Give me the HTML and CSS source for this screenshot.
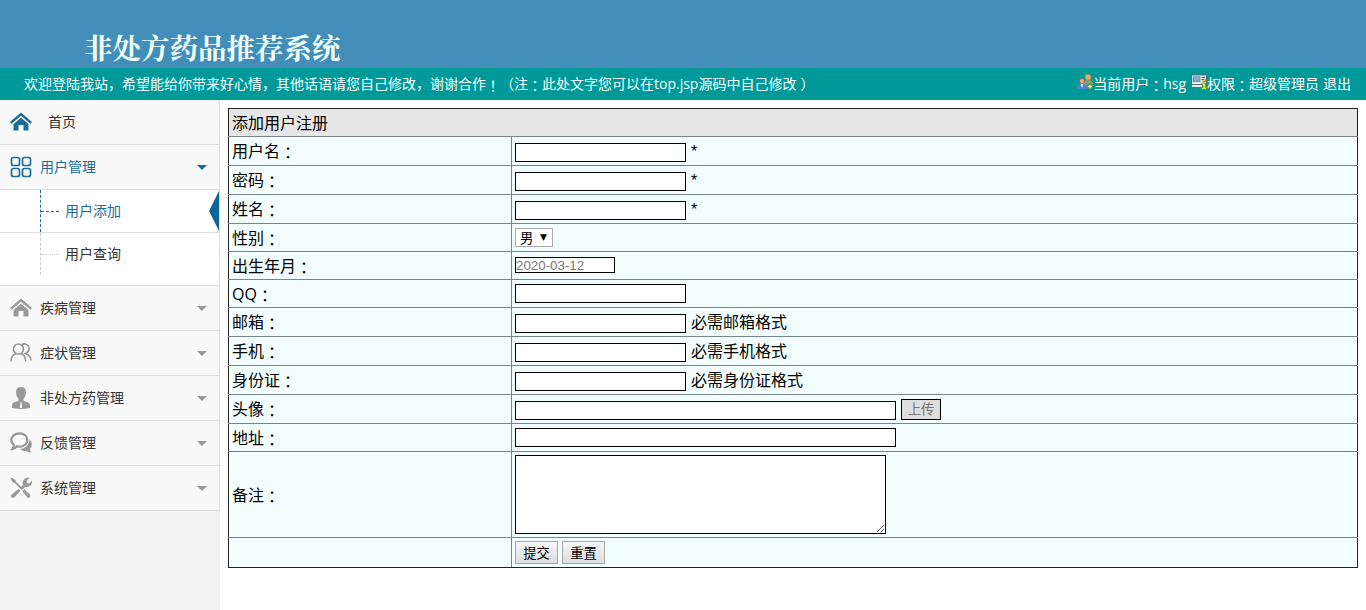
FILE: index.html
```html
<!DOCTYPE html>
<html>
<head>
  <meta charset="UTF-8">
  <title>非处方药品推荐系统</title>
  <link rel="stylesheet" href="styles.css">
</head>
<body>

  <div class="header">
    <h1>非处方药品推荐系统</h1>
  </div>

  <div class="topbar">
    <div class="welcome">欢迎登陆我站，希望能给你带来好心情，其他话语请您自己修改，谢谢合作<span class="colon">！</span>（注<span class="colon">：</span>此处文字您可以在top.jsp源码中自己修改<span class="paren">）</span></div>
    <div class="user-info">
      <svg class="ico" width="16" height="16" viewBox="0 0 16 16">
        <path d="M6 12V9.500q0-3.500 5-3.500t5 3.500V14H6z" fill="#7ea06a"/>
        <circle cx="11" cy="3.200" r="3" fill="#dcae68" stroke="#b0843c" stroke-width=".6"/>
        <path d="M0 15q0-5.500 5-5.500t5 5.500z" fill="#4b83d0"/>
        <path d="M3.500 9.500h3L5 14z" fill="#fff"/>
        <circle cx="5" cy="7" r="2.500" fill="#eeb08c" stroke="#b2543a" stroke-width=".8"/>
        <circle cx="13" cy="12.500" r="2.900" fill="#459c38"/>
        <path d="M13 10.800v3.400M11.300 12.500h3.400" stroke="#fff" stroke-width="1.200"/>
      </svg>
      <span>当前用户<span class="colon">：</span>hsg</span>
      <svg class="ico ico-role" width="16" height="16" viewBox="0 0 16 16">
        <rect x=".5" y="1" width="15" height="9.500" fill="#f1f3f5" stroke="#5d6a78"/>
        <rect x="2" y="2.800" width="7" height="5" fill="#84a9cf" stroke="#56708c" stroke-width=".6"/>
        <path d="M10.500 3.500h3.500M10.500 5.500h2" stroke="#456"/>
        <path d="M1 12h10" stroke="#e9eef0" stroke-width="2"/>
        <path d="M12 5.500h2.500v2.300H12zM10.800 9h3.700v4.500h1v2h-5v-2H12V11h-1.200z" fill="#d8ec28" stroke="#6d8d14" stroke-width=".7"/>
      </svg>
      <span>权限<span class="colon">：</span>超级管理员</span>
      <a class="logout" href="#">退出</a>
    </div>
  </div>

  <div class="main">
    <ul class="sidebar">
      <li class="menu home">
        <svg class="menu-icon" width="22" height="22" viewBox="0 0 22 22"><path d="M11 1.500L0 11l1.600 1.700L11 4.800l9.400 7.900L22 11z"/><path d="M11 6.800L3.500 13v6.500h5V14h5v5.500h5V13z"/></svg>
        <span>首页</span>
      </li>
      <li class="menu open">
        <svg class="menu-icon line" width="22" height="22" viewBox="0 0 22 22"><rect x="1.500" y="1.500" width="8" height="8" rx="2"/><rect x="12.500" y="1.500" width="8" height="8" rx="2"/><rect x="1.500" y="12.500" width="8" height="8" rx="2"/><rect x="12.500" y="12.500" width="8" height="8" rx="2"/></svg>
        <span>用户管理</span>
        <i class="caret"></i>
      </li>
      <li class="submenu">
        <div class="sub-row active"><a class="sub" href="#"><span>用户添加</span></a></div>
        <div class="sub-row"><a class="sub" href="#"><span>用户查询</span></a></div>
      </li>
      <li class="menu">
        <svg class="menu-icon" width="22" height="22" viewBox="0 0 22 22"><path d="M11 1.500L0 11l1.600 1.700L11 4.800l9.400 7.900L22 11z"/><path d="M11 6.800L3.500 13v6.500h5V14h5v5.500h5V13z"/></svg>
        <span>疾病管理</span>
        <i class="caret"></i>
      </li>
      <li class="menu">
        <svg class="menu-icon line" width="22" height="22" viewBox="0 0 22 22"><circle cx="8.500" cy="7" r="5"/><path d="M1 19.500q.3-6.500 5-8M11 11.500q4.500 2 4.800 8M11.500 3q1.500-1.200 3.500-1 4.500.8 4 5.200-.5 3-3.500 4.300 5 1.500 5.500 7"/></svg>
        <span>症状管理</span>
        <i class="caret"></i>
      </li>
      <li class="menu">
        <svg class="menu-icon" width="22" height="22" viewBox="0 0 22 22"><path d="M11 0q5 0 5 5.500 0 4-2.500 6.500v2q6.500 1 6.500 4v3q-9 2-18 0v-3q0-3 6.500-4v-2Q6 9.500 6 5.500 6 0 11 0z"/><path d="M10.400 15.500h1.200l.6 5.500H9.800z" fill="#f9f9f9"/></svg>
        <span>非处方药管理</span>
        <i class="caret"></i>
      </li>
      <li class="menu">
        <svg class="menu-icon" width="22" height="22" viewBox="0 0 22 22"><path d="M9.500 1.300c4.700 0 7.800 3 7.800 6.700s-3.100 6.700-7.800 6.700q-1.500 0-2.700-.4-1.800 2.500-4.300 2.700 1.500-1.700 1.300-4Q1.300 11 1.300 8c0-3.700 3.500-6.700 8.200-6.700z" fill="none" stroke="#999" stroke-width="2.300"/><path d="M19.800 7.500q4 4.500.2 9.500 0 2 1.200 3.500-2.500.5-4.700-1.500-4.500.5-6.500-2 8.500-.5 9.800-9.500z"/></svg>
        <span>反馈管理</span>
        <i class="caret"></i>
      </li>
      <li class="menu">
        <svg class="menu-icon" width="22" height="22" viewBox="0 0 22 22"><path d="M.5 1.800l1.300-1.100 3.400 2 .8 2 6 6-1.300 1.300-6-6-2-.8z"/><path d="M12.300 14.300l2-2 5.500 5.200q1.200 1.500 0 2.700t-2.700 0z"/><path d="M1.500 17.800l7-6 2 2-6 6.500q-1.500 1.500-3 0t0-2.500z"/><path d="M10 11l3-3q-1-4 1.500-6Q17 0 19.500.8L16.500 4l.5 2 2 .5L22 3.500q.5 3-1.500 5-2 2-5.500 1.500l-3 3z"/></svg>
        <span>系统管理</span>
        <i class="caret"></i>
      </li>
    </ul>

    <div class="content">
      <table class="form-table">
        <colgroup>
          <col class="col-label">
          <col>
        </colgroup>
        <tr class="row-title"><td colspan="2">添加用户注册</td></tr>
        <tr class="row-tall">
          <td>用户名<span class="colon">：</span></td>
          <td><div class="field"><input type="text"><span class="star">*</span></div></td>
        </tr>
        <tr class="row-tall">
          <td>密码<span class="colon">：</span></td>
          <td><div class="field"><input type="text"><span class="star">*</span></div></td>
        </tr>
        <tr class="row-tall">
          <td>姓名<span class="colon">：</span></td>
          <td><div class="field"><input type="text"><span class="star">*</span></div></td>
        </tr>
        <tr>
          <td>性别<span class="colon">：</span></td>
          <td><div class="field"><div class="select">男<span class="arrow">▼</span></div></div></td>
        </tr>
        <tr>
          <td>出生年月<span class="colon">：</span></td>
          <td><div class="field"><input class="date" type="text" value="2020-03-12"></div></td>
        </tr>
        <tr>
          <td>QQ<span class="colon">：</span></td>
          <td><div class="field"><input type="text"></div></td>
        </tr>
        <tr class="row-tall">
          <td>邮箱<span class="colon">：</span></td>
          <td><div class="field"><input type="text"><span class="tip">必需邮箱格式</span></div></td>
        </tr>
        <tr class="row-tall">
          <td>手机<span class="colon">：</span></td>
          <td><div class="field"><input type="text"><span class="tip">必需手机格式</span></div></td>
        </tr>
        <tr class="row-tall">
          <td>身份证<span class="colon">：</span></td>
          <td><div class="field"><input type="text"><span class="tip">必需身份证格式</span></div></td>
        </tr>
        <tr class="row-tall">
          <td>头像<span class="colon">：</span></td>
          <td><div class="field"><input class="long" type="text"><button class="upload">上传</button></div></td>
        </tr>
        <tr>
          <td>地址<span class="colon">：</span></td>
          <td><div class="field"><input class="long" type="text"></div></td>
        </tr>
        <tr class="row-memo">
          <td>备注<span class="colon">：</span></td>
          <td><div class="field"><textarea></textarea></div></td>
        </tr>
        <tr class="row-buttons">
          <td></td>
          <td><div class="field"><button class="btn">提交</button><button class="btn">重置</button></div></td>
        </tr>
      </table>
    </div>
  </div>

</body>
</html>
```
FILE: styles.css
```css
* {
  box-sizing: border-box;
}

body {
  margin: 0;
  height: 610px;
  overflow: hidden;
  display: flex;
  flex-direction: column;
  font-family: "Open Sans", "Noto Sans CJK SC", sans-serif;
  font-size: 14px;
  color: #000;
  background: #fff;
}

/* centred full-width punctuation */
.colon {
  font-family: "Noto Sans CJK TC", sans-serif;
  line-height: 1;
  vertical-align: -2px;
}

/* header */
.header {
  height: 68px;
  flex: none;
  padding: 27px 0 0 84px;
  background: #438eb9;
}

h1 {
  margin: 0;
  font-family: "Noto Serif CJK SC", "Noto Sans CJK SC", serif;
  font-size: 28.5px;
  line-height: 40px;
  font-weight: bold;
  color: #f0ffff;
}

.topbar {
  height: 32px;
  flex: none;
  display: flex;
  justify-content: space-between;
  padding: 0 15px 0 24px;
  line-height: 32px;
  color: #fff;
  background: #009999;
  white-space: nowrap;
}

.welcome {
  color: #f0ffff;
}

.paren {
  margin-left: 4px;
}

.user-info {
  display: flex;
}

.ico {
  margin-top: 6px;
}

.ico-role {
  margin-left: 5px;
}

.logout {
  margin-left: 4px;
  color: #fff;
  text-decoration: none;
}

.main {
  flex: 1;
  display: flex;
}

/* sidebar */
.sidebar {
  width: 220px;
  flex: none;
  margin: 0;
  padding: 0;
  list-style: none;
  background: #f1f1f1;
}

.menu {
  height: 45px;
  display: flex;
  align-items: center;
  padding: 0 12px 0 10px;
  border-bottom: 1px solid #ddd;
  border-right: 1px solid #ddd;
  background: #f9f9f9;
  color: #333;
}

.menu span,
.sub span {
  padding-bottom: 2px;
}

.menu-icon {
  margin-right: 8px;
  fill: #999;
}

.menu-icon.line {
  fill: none;
  stroke: #999;
  stroke-width: 1.7;
}

.home .menu-icon {
  margin-right: 16px;
  fill: #1d6c98;
}

.open {
  color: #1d6c98;
}

.open .menu-icon.line {
  stroke: #1d6c98;
}

.caret {
  margin-left: auto;
  border: 5px solid transparent;
  border-top-color: #999;
  border-bottom: 0;
}

.open .caret {
  border-top-color: #1d6c98;
}

.submenu {
  height: 96px;
  border-bottom: 1px solid #ddd;
  border-right: 1px solid #ddd;
  background: #fff;
}

.sub-row {
  height: 42px;
  padding-left: 40px;
}

.sub {
  height: 42px;
  display: flex;
  align-items: center;
  border-left: 1px dashed #ccc;
  color: #333;
  text-decoration: none;
}

.sub::before {
  content: "";
  width: 18px;
  margin-right: 6px;
  border-top: 1px dotted #ccc;
}

.active {
  height: 43px;
  border-bottom: 1px solid #ddd;
}

.active .sub {
  color: #1d6c98;
  border-left-color: #1d6c98;
}

.active .sub::before {
  border-top: 1px dashed #1d6c98;
}

.active .sub::after {
  content: "";
  margin-left: auto;
  border: 20px solid transparent;
  border-left: 0;
  border-right: 10px solid #0b6699;
}

/* form */
.content {
  flex: 1;
  padding: 8px;
}

.form-table {
  width: 1130px;
  table-layout: fixed;
  border-collapse: collapse;
  background: #f3ffff;
  font-size: 16px;
}

.col-label {
  width: 283px;
}

.form-table tr {
  height: 28px;
}

.form-table .row-tall {
  height: 29px;
}

.form-table .row-memo {
  height: 86px;
}

.form-table .row-buttons {
  height: 30px;
}

td {
  padding: 0 3px;
  border: 1px solid #778787;
  line-height: 22px;
}

td:first-child {
  border-left-color: #222;
}

td:last-child {
  border-right-color: #222;
}

.row-buttons td {
  border-bottom-color: #222;
}

.row-title td {
  border-top-color: #222;
  background: #e6e6e6;
}

.field {
  display: flex;
  align-items: center;
  gap: 5px;
}

.row-tall input {
  margin-top: 3px;
}

input {
  width: 171px;
  height: 19px;
  padding: 0 1px;
  border: 1px solid #000;
  background: #fff;
}

.date {
  width: 100px;
  height: 16px;
  margin-bottom: 1px;
  padding: 0;
  font: 13.33px "Liberation Sans", sans-serif;
  color: #777;
}

.long {
  width: 381px;
}

.tip {
  line-height: 22px;
}

.star {
  padding-top: 1px;
  font: 16px/22px "Liberation Sans", sans-serif;
}

.select {
  width: 38px;
  height: 19px;
  display: flex;
  justify-content: space-between;
  padding: 0 5px 0 4px;
  border: 1px solid #aaa;
  background: #fff;
  font-size: 13.33px;
  line-height: 18px;
}

.arrow {
  font: 9px/16px "DejaVu Sans", sans-serif;
}

button {
  padding: 0;
  font-family: "Noto Sans CJK SC", sans-serif;
  font-size: 13.33px;
}

.upload {
  width: 40px;
  height: 21px;
  border: 1px solid #000;
  background: #ddd;
  color: #777;
  line-height: 18px;
}

textarea {
  width: 371px;
  height: 79px;
  margin: 0;
  border: 1px solid #000;
}

.btn {
  width: 43px;
  height: 23px;
  border: 1px solid #a5a9a9;
  background: linear-gradient(#f6f6f6, #dedede);
  line-height: 20px;
}

.row-buttons .field {
  gap: 4px;
}
```
